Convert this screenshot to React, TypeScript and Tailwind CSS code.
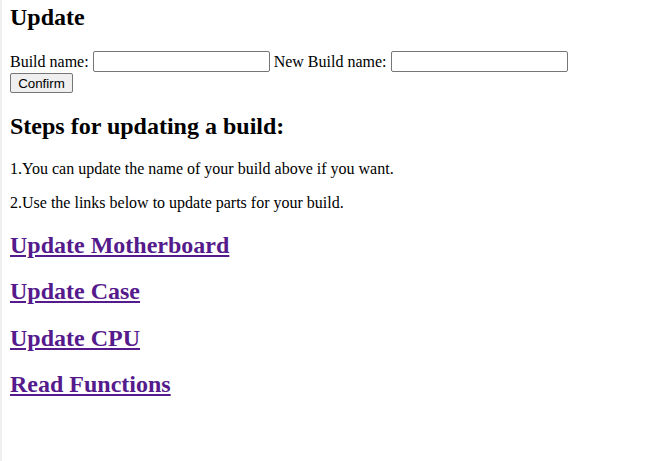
const links = ["Update Motherboard", "Update Case", "Update CPU", "Read Functions"];

export default function App() {
  return (
    <div className="min-h-[461px] border-l-2 border-[#f0f0f0] bg-white pl-2 pr-2 pt-[4px] font-['Liberation_Serif',serif] text-[16px] leading-[normal] text-black">
      <h2 className="mb-[20px] text-[24px] font-bold leading-[normal]">Update</h2>

      {/* Rename form */}
      <form onSubmit={(e) => e.preventDefault()}>
        <div className="flex h-[21px] items-center whitespace-pre">
          <label htmlFor="build-name">Build name: </label>
          <input
            id="build-name"
            type="text"
            className="h-[21px] w-[177px] rounded-[2px] border border-[#767676] px-[2px] py-[1px] font-['Liberation_Sans',sans-serif] text-[13.333px]"
          />
          <label htmlFor="new-build-name"> New Build name: </label>
          <input
            id="new-build-name"
            type="text"
            className="h-[21px] w-[177px] rounded-[2px] border border-[#767676] px-[2px] py-[1px] font-['Liberation_Sans',sans-serif] text-[13.333px]"
          />
        </div>
        <button
          type="submit"
          className="mt-[1px] block h-[20px] w-[63px] rounded-[2px] border border-[#767676] bg-[#efefef] px-[6px] font-['Liberation_Sans',sans-serif] text-[13.333px] leading-[normal] text-black"
        >
          Confirm
        </button>
      </form>

      <h2 className="mt-[20px] mb-[20px] text-[24px] font-bold leading-[normal]">
        Steps for updating a build:
      </h2>
      <p className="my-4">1.You can update the name of your build above if you want.</p>
      <p className="my-4">2.Use the links below to update parts for your build.</p>

      {/* Part links */}
      {links.map((label) => (
        <h2 key={label} className="my-[19.6px] text-[24px] font-bold leading-[normal]">
          <a href="#" className="text-[#551a8b] underline">
            {label}
          </a>
        </h2>
      ))}
    </div>
  );
}
